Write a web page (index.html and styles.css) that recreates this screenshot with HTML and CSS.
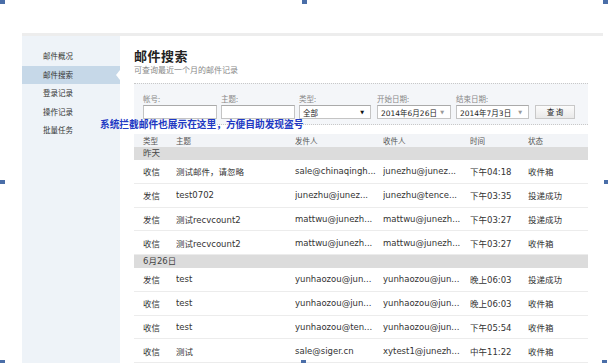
FILE: index.html
```html
<!DOCTYPE html>
<html lang="zh">
<head>
<meta charset="utf-8">
<title>邮件搜索</title>
<link rel="stylesheet" href="styles.css">
</head>
<body>
<div class="page">
  <div class="panel">
    <nav class="sidebar">
      <div class="nav-item">邮件概况</div>
      <div class="nav-item active">邮件搜索</div>
      <div class="nav-item">登录记录</div>
      <div class="nav-item">操作记录</div>
      <div class="nav-item">批量任务</div>
    </nav>
    <main class="main">
      <h1 class="title">邮件搜索</h1>
      <p class="subtitle">可查询最近一个月的邮件记录</p>
      <div class="search">
        <div class="field f1"><label>帐号:</label><div class="input"></div></div>
        <div class="field f2"><label>主题:</label><div class="input"></div></div>
        <div class="field f3"><label>类型:</label><div class="select"><span>全部</span><span class="arrow dark">▼</span></div></div>
        <div class="field f4"><label>开始日期:</label><div class="select"><span>2014年6月26日</span><span class="arrow">▼</span></div></div>
        <div class="field f5"><label>结束日期:</label><div class="select"><span>2014年7月3日</span><span class="arrow">▼</span></div></div>
        <div class="field f6"><div class="btn">查 询</div></div>
      </div>
      <div class="table">
        <div class="row head"><span>类型</span><span>主题</span><span>发件人</span><span>收件人</span><span>时间</span><span>状态</span></div>
        <div class="group">昨天</div>
        <div class="row"><span>收信</span><span>测试邮件，请忽略</span><span>sale@chinaqingh...</span><span>junezhu@junez...</span><span>下午04:18</span><span>收件箱</span></div>
        <div class="row"><span>发信</span><span>test0702</span><span>junezhu@junez...</span><span>junezhu@tence...</span><span>下午03:35</span><span>投递成功</span></div>
        <div class="row"><span>发信</span><span>测试recvcount2</span><span>mattwu@junezh...</span><span>mattwu@junezh...</span><span>下午03:27</span><span>投递成功</span></div>
        <div class="row"><span>收信</span><span>测试recvcount2</span><span>mattwu@junezh...</span><span>mattwu@junezh...</span><span>下午03:27</span><span>收件箱</span></div>
        <div class="group">6月26日</div>
        <div class="row"><span>发信</span><span>test</span><span>yunhaozou@jun...</span><span>yunhaozou@jun...</span><span>晚上06:03</span><span>投递成功</span></div>
        <div class="row"><span>收信</span><span>test</span><span>yunhaozou@jun...</span><span>yunhaozou@jun...</span><span>晚上06:03</span><span>收件箱</span></div>
        <div class="row"><span>收信</span><span>test</span><span>yunhaozou@ten...</span><span>yunhaozou@jun...</span><span>下午05:54</span><span>收件箱</span></div>
        <div class="row"><span>收信</span><span>测试</span><span>sale@siger.cn</span><span>xytest1@junezh...</span><span>中午11:22</span><span>收件箱</span></div>
      </div>
    </main>
  </div>
  <div class="note">系统拦截邮件也展示在这里，方便自助发现盗号</div>
</div>
<div class="handle h-tl"></div>
<div class="handle h-tm"></div>
<div class="handle h-tr"></div>
<div class="handle h-ml"></div>
<div class="handle h-mr"></div>
<div class="handle h-bl"></div>
<div class="handle h-bm"></div>
<div class="handle h-br"></div>
</body>
</html>
```
FILE: styles.css
```css
* { box-sizing: border-box; }
html, body { margin: 0; padding: 0; background: #fff; overflow: hidden; }
body {
  width: 608px; height: 363px; position: relative;
  font-family: "DejaVu Sans", "Noto Sans CJK SC", sans-serif;
  color: #333;
}
.page { padding: 33px 5px 0 22px; }
.panel {
  display: flex;
  border-top: 3px solid #ededed;
  height: 330px;
}
.sidebar {
  width: 98px;
  background: #eef3f8;
  padding-top: 11px;
  flex: none;
}
.nav-item {
  position: relative;
  height: 18.5px;
  line-height: 18.5px;
  padding-left: 21px;
  font-size: 7.5px;
  color: #333;
  font-family: "Noto Sans CJK SC", sans-serif;
}
.nav-item.active { background: #c6d8e8; }
.nav-item.active::after {
  content: "";
  position: absolute;
  right: 0; top: 4px;
  border-style: solid;
  border-width: 5px 4px 5px 0;
  border-color: transparent #fff transparent transparent;
}
.main { flex: 1; padding: 12px 15px 0 14px; }
.title {
  margin: 0;
  font-size: 13px;
  line-height: 16px;
  letter-spacing: 0.5px;
  font-weight: 700;
  color: #222;
  font-family: "Noto Sans CJK SC", sans-serif;
}
.subtitle {
  margin: 0 0 8px;
  font-size: 8px;
  line-height: 11px;
  color: #888;
  font-family: "Noto Sans CJK SC", sans-serif;
}
.search {
  display: flex;
  align-items: flex-end;
  background: #f4f6f9;
  border-top: 1px dotted #c8c8c8;
  border-bottom: 1px dotted #c8c8c8;
  padding: 9px 0 5px 9px;
  height: 42px;
}
.field { display: flex; flex-direction: column; flex: none; }
.f1, .f2 { width: 78px; }
.f3 { width: 78px; }
.f4 { width: 79px; }
.f5 { width: 79px; }
.field label {
  font-size: 7.5px;
  line-height: 10px;
  color: #888;
  margin-bottom: 1px;
  font-family: "Noto Sans CJK SC", sans-serif;
}
.input, .select {
  height: 14px;
  background: #fff;
  border: 1px solid #c4c4c4;
  border-top-color: #aaa;
}
.f1 .input, .f2 .input, .f4 .select { width: 74px; }
.f3 .select { width: 72px; }
.f5 .select { width: 73px; }
.select {
  display: flex; align-items: center; justify-content: space-between;
  padding: 0 6px 0 3px;
  font-size: 7.5px;
  color: #222;
  white-space: nowrap;
  overflow: hidden;
}
.select span { flex: none; }
.arrow { font-size: 5px; color: #999; }
.arrow.dark { color: #111; }
.btn {
  width: 40px; height: 14px;
  border: 1px solid #c8c8c8;
  background: linear-gradient(#fbfbfb, #e9e9e9);
  font-size: 7.5px; line-height: 12px;
  text-align: center; color: #222;
  font-family: "Noto Sans CJK SC", sans-serif;
}
.table { margin-top: 9px; width: 454px; }
.row {
  display: grid;
  grid-template-columns: 42px 119px 88px 87px 58px 1fr;
  align-items: center;
  height: 23.75px;
  border-bottom: 1px solid #ececec;
  font-size: 8.5px;
  color: #333;
}
.row span { padding-left: 0; white-space: nowrap; overflow: hidden; }
.row span:first-child { padding-left: 9px; }
.row.head {
  height: 13px;
  background: #f2f4f7;
  border-bottom: none;
  font-size: 7.5px;
  color: #555;
}
.group {
  height: 13px;
  line-height: 13px;
  background: #dcdcdc;
  padding-left: 9px;
  font-size: 8.5px;
  color: #444;
}
.note {
  position: absolute;
  left: 100px; top: 118px;
  font-size: 9.7px;
  line-height: 12px;
  font-weight: 700;
  color: #2038c4;
  font-family: "Noto Sans CJK SC", sans-serif;
  white-space: nowrap;
}
.handle { position: absolute; width: 5px; height: 4px; background: #4a6ea8; }
.h-tl { left: 0; top: 0; }
.h-tm { left: 302px; top: 0; }
.h-tr { left: 603px; top: 0; }
.h-ml { left: 0; top: 180px; }
.h-mr { left: 604px; top: 180px; }
.h-bl { left: 0; top: 360px; }
.h-bm { left: 301px; top: 360px; }
.h-br { left: 602px; top: 360px; }
```
